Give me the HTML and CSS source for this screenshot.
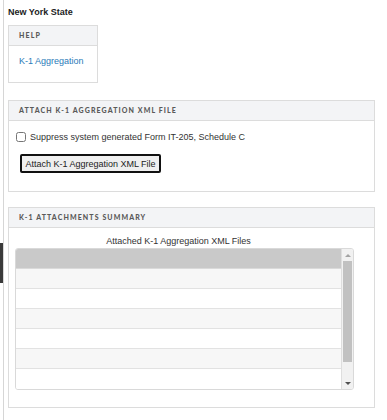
FILE: index.html
```html
<!DOCTYPE html>
<html lang="en">
  <head>
    <meta charset="UTF-8" />
    <title>New York State - K-1 Aggregation</title>
    <link rel="stylesheet" href="styles.css">
  </head>
  <body>
    <div class="page">
      <h1 class="state">New York State</h1>

      <div class="panel help">
        <div class="panel-head">Help</div>
        <div class="panel-body help-body">
          <a href="#">K-1 Aggregation</a>
        </div>
      </div>

      <div class="panel attach">
        <div class="panel-head">Attach K-1 Aggregation XML File</div>
        <div class="panel-body attach-body">
          <label class="check">
            <input type="checkbox" />
            <span>Suppress system generated Form IT-205, Schedule C</span>
          </label>
          <button class="attach-btn">Attach K-1 Aggregation XML File</button>
        </div>
      </div>

      <div class="panel summary">
        <div class="panel-head">K-1 Attachments Summary</div>
        <div class="panel-body summary-body">
          <div class="caption">Attached K-1 Aggregation XML Files</div>
          <div class="grid">
            <div class="rows">
              <div class="row head"></div>
              <div class="row alt"></div>
              <div class="row"></div>
              <div class="row alt"></div>
              <div class="row"></div>
              <div class="row alt"></div>
              <div class="row last"></div>
            </div>
            <div class="scrollbar">
              <div class="arrow up"></div>
              <div class="track"><div class="thumb"></div></div>
              <div class="arrow down"></div>
            </div>
          </div>
        </div>
      </div>
    </div>

    <div class="side-tab"></div>
  </body>
</html>
```

FILE: styles.css
```css
body {
  margin: 0;
  background-color: #ffffff;
  font-family: "Liberation Sans", Arial, sans-serif;
  font-size: 9px;
  color: #333;
}
.page {
  margin-left: 3px;
  border-left: 1px solid #d6d6d6;
  padding: 0 12px 0 4px;
  min-height: 420px;
  box-sizing: border-box;
}
.state {
  margin: 0;
  padding-top: 6px;
  font-size: 9px;
  line-height: 13px;
  font-weight: bold;
  color: #222;
}
.panel {
  border: 1px solid #dcdcdc;
  background-color: #fff;
}
.panel-head {
  height: 19px;
  line-height: 19px;
  padding-left: 10px;
  background-color: #f3f4f6;
  border-bottom: 1px solid #dcdcdc;
  font-family: "Lato", "Open Sans", sans-serif;
  font-weight: 900;
  font-size: 7px;
  letter-spacing: 1.1px;
  text-transform: uppercase;
  color: #5a5a5a;
}
.help {
  margin-top: 6px;
  width: 88px;
}
.help-body {
  height: 36px;
  padding: 9px 10px 0;
  box-sizing: border-box;
}
.help-body a {
  color: #2b7bb9;
  text-decoration: none;
  line-height: 12px;
}
.attach {
  margin-top: 17px;
}
.attach-body {
  height: 70px;
  padding: 11px 7px 0;
  box-sizing: border-box;
}
.check {
  display: flex;
  align-items: center;
  height: 10px;
  gap: 4px;
}
.check input {
  margin: 0;
  width: 10px;
  height: 10px;
}
.attach-btn {
  display: block;
  margin: 12px 0 0 4px;
  height: 19px;
  width: 141px;
  padding: 0;
  border: 2px solid #111;
  border-radius: 2px;
  background-color: #efefef;
  font-family: "Liberation Sans", Arial, sans-serif;
  font-size: 9px;
  color: #222;
}
.summary {
  margin-top: 15px;
}
.summary-body {
  padding: 6px 20px 17px 6px;
}
.caption {
  height: 14px;
  line-height: 14px;
  text-align: center;
  padding-right: 12px;
  font-size: 9px;
}
.grid {
  display: flex;
  border: 1px solid #d9d9d9;
  border-radius: 3px;
  overflow: hidden;
}
.rows {
  flex: 1;
}
.row {
  height: 19px;
  border-bottom: 1px solid #e2e2e2;
  background-color: #fff;
}
.row.alt {
  background-color: #f7f7f7;
}
.row.head {
  background-color: #c9c9c9;
  border-bottom-color: #dadada;
}
.row.last {
  border-bottom: none;
  height: 20px;
}
.scrollbar {
  width: 11px;
  border-left: 1px solid #dedede;
  background-color: #f1f1f1;
  display: flex;
  flex-direction: column;
}
.arrow {
  height: 12px;
  position: relative;
}
.arrow::after {
  content: "";
  position: absolute;
  left: 3px;
  top: 5px;
  border-left: 3px solid transparent;
  border-right: 3px solid transparent;
}
.arrow.up::after {
  border-bottom: 3px solid #a3a3a3;
}
.arrow.down::after {
  border-top: 3px solid #505050;
}
.track {
  flex: 1;
  padding: 0 1px;
}
.thumb {
  height: 101px;
  background-color: #c1c1c1;
}
.side-tab {
  position: absolute;
  left: 0;
  top: 243px;
  width: 3px;
  height: 40px;
  background-color: #3a3a3a;
}
```
